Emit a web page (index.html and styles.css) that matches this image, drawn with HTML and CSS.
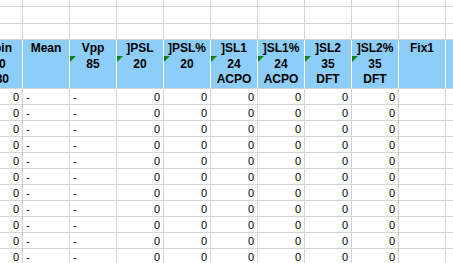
FILE: index.html
```html
<!DOCTYPE html>
<html>
<head>
<meta charset="utf-8">
<link rel="stylesheet" href="styles.css">
</head>
<body>
<div class="sheet">
  <div class="row r-top"><div class="c"></div><div class="c"></div><div class="c"></div><div class="c"></div><div class="c"></div><div class="c"></div><div class="c"></div><div class="c"></div><div class="c"></div><div class="c"></div><div class="c"></div></div>
  <div class="row r-blank"><div class="c"></div><div class="c"></div><div class="c"></div><div class="c"></div><div class="c"></div><div class="c"></div><div class="c"></div><div class="c"></div><div class="c"></div><div class="c"></div><div class="c"></div></div>
  <div class="row r-blank2"><div class="c"></div><div class="c"></div><div class="c"></div><div class="c"></div><div class="c"></div><div class="c"></div><div class="c"></div><div class="c"></div><div class="c"></div><div class="c"></div><div class="c"></div></div>
  <div class="row r-head">
    <div class="c h">Spin<br>20<br>130</div>
    <div class="c h">Mean</div>
    <div class="c h"><span class="flag"></span>Vpp<br>85</div>
    <div class="c h"><span class="flag"></span>]PSL<br>20</div>
    <div class="c h"><span class="flag"></span>]PSL%<br>20</div>
    <div class="c h"><span class="flag"></span>]SL1<br>24<br>ACPO</div>
    <div class="c h"><span class="flag"></span>]SL1%<br>24<br>ACPO</div>
    <div class="c h"><span class="flag"></span>]SL2<br>35<br>DFT</div>
    <div class="c h"><span class="flag"></span>]SL2%<br>35<br>DFT</div>
    <div class="c h">Fix1</div>
    <div class="c h"></div>
  </div>
  <div id="rows"></div>
</div>
<script src="app.js"></script>
</body>
</html>
```
FILE: app.js
```js
var wrap = document.getElementById('rows');
var html = '';
for (var i = 0; i < 11; i++) {
  html += '<div class="row r-data">' +
    '<div class="c n">0</div>' +
    '<div class="c t">-</div>' +
    '<div class="c t">-</div>' +
    '<div class="c n">0</div>' +
    '<div class="c n">0</div>' +
    '<div class="c n">0</div>' +
    '<div class="c n">0</div>' +
    '<div class="c n">0</div>' +
    '<div class="c n">0</div>' +
    '<div class="c"></div>' +
    '<div class="c"></div>' +
    '</div>';
}
wrap.innerHTML = html;
```
FILE: styles.css
```css
html, body {
  margin: 0;
  padding: 0;
  background: #ffffff;
  overflow: hidden;
}
.sheet {
  margin-left: -24px;
  margin-top: -10px;
  font-family: "Liberation Sans", Arial, sans-serif;
  color: #000;
  width: 560px;
}
.row {
  display: flex;
}
.c {
  box-sizing: border-box;
  width: 47px;
  flex: 0 0 47px;
  border-right: 1px solid #d4d4d4;
  border-bottom: 1px solid #d4d4d4;
  position: relative;
  overflow: hidden;
  white-space: nowrap;
}
.r-top .c { height: 17px; }
.r-blank .c { height: 17px; }
.r-blank2 .c { height: 16px; }
.r-head .c {
  height: 49px;
}
.h {
  background: #8ccef8;
  border-right-color: #ffffff;
  font-weight: bold;
  font-size: 12px;
  line-height: 15.5px;
  padding-top: 1px;
  text-align: center;
  overflow: visible;
}
.r-head .c:first-child {
  overflow: visible;
}
.flag {
  position: absolute;
  left: 0;
  top: 16px;
  width: 0;
  height: 0;
  border-top: 6px solid #128012;
  border-right: 6px solid transparent;
}
.r-data .c {
  height: 16px;
  font-size: 11px;
  line-height: 15px;
}
.n {
  text-align: right;
  padding-right: 3px;
  padding-top: 1px;
}
.t {
  text-align: left;
  padding-left: 3px;
  padding-top: 1px;
}
```
